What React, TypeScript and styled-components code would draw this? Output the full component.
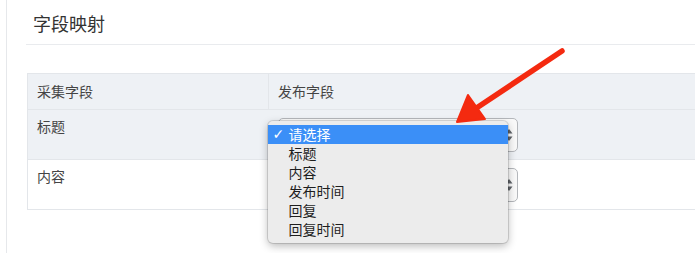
import React from 'react'
import styled, { createGlobalStyle } from 'styled-components'

const GlobalStyle = createGlobalStyle`
  html, body {
    margin: 0;
    padding: 0;
    background: #ffffff;
    overflow: hidden;
  }
  body {
    font-family: "Noto Sans CJK SC", "Noto Sans", "Liberation Sans", sans-serif;
    color: #333333;
  }
`

const options = ['请选择', '标题', '内容', '发布时间', '回复', '回复时间']

const rows = [
  { name: '标题', open: true },
  { name: '内容', open: false },
]

const SelectBox: React.FC<{ open: boolean }> = ({ open }) => (
  <SelectWrap>
    <Select>
      <Spinner width="8" height="14" viewBox="0 0 8 14">
        <path d="M4 1 L7.5 5.5 H0.5 Z" fill="#5f6368" />
        <path d="M4 13 L7.5 8.5 H0.5 Z" fill="#5f6368" />
      </Spinner>
    </Select>
    {open && (
      <Menu>
        {options.map((o, i) => (
          <MenuItem key={o} active={i === 0}>
            {i === 0 && <Check>✓</Check>}
            {o}
          </MenuItem>
        ))}
      </Menu>
    )}
  </SelectWrap>
)

const App: React.FC = () => {
  return (
    <Page>
      <GlobalStyle />
      <Panel>
        <Title>字段映射</Title>
        <Divider />
        <Table>
          <thead>
            <tr>
              <Th>采集字段</Th>
              <Th>发布字段</Th>
            </tr>
          </thead>
          <tbody>
            {rows.map((r) => (
              <Row key={r.name} shaded={r.open}>
                <Td>{r.name}</Td>
                <Td>
                  <SelectBox open={r.open} />
                </Td>
              </Row>
            ))}
          </tbody>
        </Table>
      </Panel>
      <Annotation width="695" height="253" viewBox="0 0 695 253">
        <line x1="562" y1="51" x2="472" y2="111" stroke="#f42a10" strokeWidth="5.5" strokeLinecap="round" />
        <path d="M457 122 L468 95 L485 119 Z" fill="#f42a10" stroke="#f42a10" strokeWidth="2" strokeLinejoin="round" />
      </Annotation>
    </Page>
  )
}
export default App

const Page = styled.div`
  position: relative;
  width: 695px;
  height: 253px;
  padding-left: 6px;
  box-sizing: border-box;
  overflow: hidden;
`

const Panel = styled.div`
  height: 100%;
  border-left: 1px solid #e6e8eb;
  padding-left: 19px;
  overflow: hidden;
`

const Title = styled.h3`
  margin: 0;
  padding: 11px 0 0 7px;
  height: 44px;
  box-sizing: border-box;
  font-size: 18px;
  font-weight: 400;
  line-height: 25px;
  color: #333333;
`

const Divider = styled.div`
  border-top: 1px solid #e9ebee;
  margin-bottom: 28px;
`

const Table = styled.table`
  margin-left: 1px;
  width: 720px;
  border-collapse: collapse;
  border: 1px solid #e3e6ea;
  font-size: 14px;
  color: #444444;
`

const Th = styled.th`
  text-align: left;
  font-weight: 400;
  background: #eef1f5;
  padding: 8px 9px;
  line-height: 19px;
  border-bottom: 1px solid #e3e6ea;
  &:first-child {
    width: 222px;
    border-right: 1px solid #e3e6ea;
  }
`

const Row = styled.tr<{ shaded: boolean }>`
  background: ${(p) => (p.shaded ? '#eef1f5' : '#ffffff')};
  border-bottom: 1px solid #e3e6ea;
`

const Td = styled.td`
  vertical-align: top;
  padding: 8px 9px 7px;
  line-height: 19px;
  &:first-child {
    padding-top: 7px;
  }
`

const SelectWrap = styled.div`
  position: relative;
  width: 240px;
`

const Select = styled.div`
  height: 34px;
  box-sizing: border-box;
  border: 1px solid #b4b7bb;
  border-radius: 5px;
  background: #f9f9f9;
  display: flex;
  align-items: center;
  justify-content: flex-end;
  padding-right: 4px;
`

const Spinner = styled.svg`
  display: block;
`

const Menu = styled.div`
  position: absolute;
  left: -10px;
  top: 3px;
  width: 240px;
  padding: 4px 0;
  background: #ececec;
  border-radius: 5px;
  box-shadow: 0 0 0 1px rgba(0, 0, 0, 0.12), 0 3px 8px rgba(0, 0, 0, 0.28);
  z-index: 2;
`

const MenuItem = styled.div<{ active: boolean }>`
  position: relative;
  height: 19px;
  line-height: 19px;
  padding-left: 21px;
  font-size: 14px;
  color: ${(p) => (p.active ? '#ffffff' : '#1e1e1e')};
  background: ${(p) => (p.active ? '#3b8ff7' : 'transparent')};
`

const Check = styled.span`
  position: absolute;
  left: 5px;
  top: 0;
  font-size: 14px;
  font-weight: 700;
  font-family: "DejaVu Sans", sans-serif;
`

const Annotation = styled.svg`
  position: absolute;
  left: 0;
  top: 0;
  pointer-events: none;
  z-index: 3;
`
